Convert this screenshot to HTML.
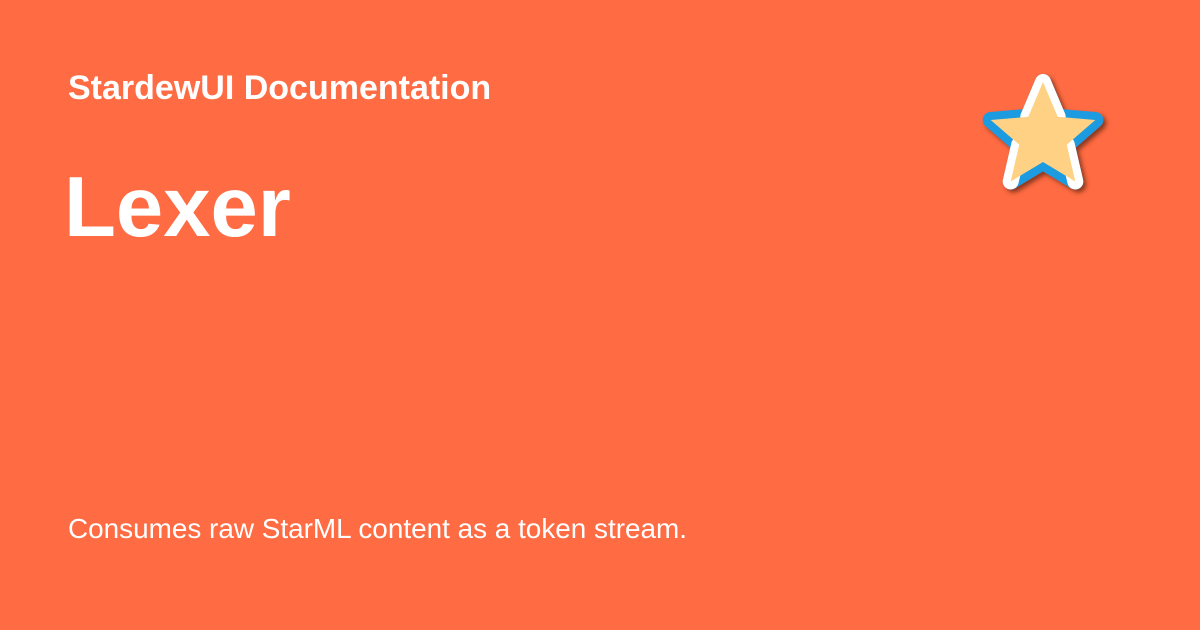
<!DOCTYPE html>
<html><head><meta charset="utf-8"><style>
html,body{margin:0;padding:0}
body{width:1200px;height:630px;background:#ff6b42;position:relative;overflow:hidden;font-family:"Liberation Sans",sans-serif;color:#fff}
.t{position:absolute;left:68px;top:69px;font-size:34px;font-weight:bold}
.h{position:absolute;left:64px;top:159px;font-size:85px;font-weight:bold}
.d{position:absolute;left:68px;top:513px;font-size:27.9px}
svg{position:absolute;left:0;top:0}
</style></head><body>
<div class="t">StardewUI Documentation</div>
<div class="h">Lexer</div>
<div class="d">Consumes raw StarML content as a token stream.</div>
<svg width="1200" height="630" viewBox="0 0 1200 630">
<defs><filter id="s" x="-20%" y="-20%" width="140%" height="140%"><feDropShadow dx="3" dy="3" stdDeviation="2" flood-color="#5a2010" flood-opacity="0.7"/></filter></defs>
<g stroke-linejoin="round" stroke-linecap="round">
<polygon filter="url(#s)" points="1043,82 1057.7,116.8 1095.3,120 1066.8,144.7 1075.3,181.5 1043,162 1010.7,181.5 1019.2,144.7 990.7,120 1028.3,116.8" fill="#ffd185" stroke="#1a9be0" stroke-width="16"/>
<polyline points="1028.3,116.8 1043,82 1057.7,116.8" fill="none" stroke="#fff" stroke-width="16"/>
<line x1="1066.8" y1="144.7" x2="1075.3" y2="181.5" stroke="#fff" stroke-width="16"/>
<line x1="1019.2" y1="144.7" x2="1010.7" y2="181.5" stroke="#fff" stroke-width="16"/>
<polygon points="1043,82 1057.7,116.8 1095.3,120 1066.8,144.7 1075.3,181.5 1043,162 1010.7,181.5 1019.2,144.7 990.7,120 1028.3,116.8" fill="#ffd185" stroke="none"/>
</g>
</svg>
</body></html>
